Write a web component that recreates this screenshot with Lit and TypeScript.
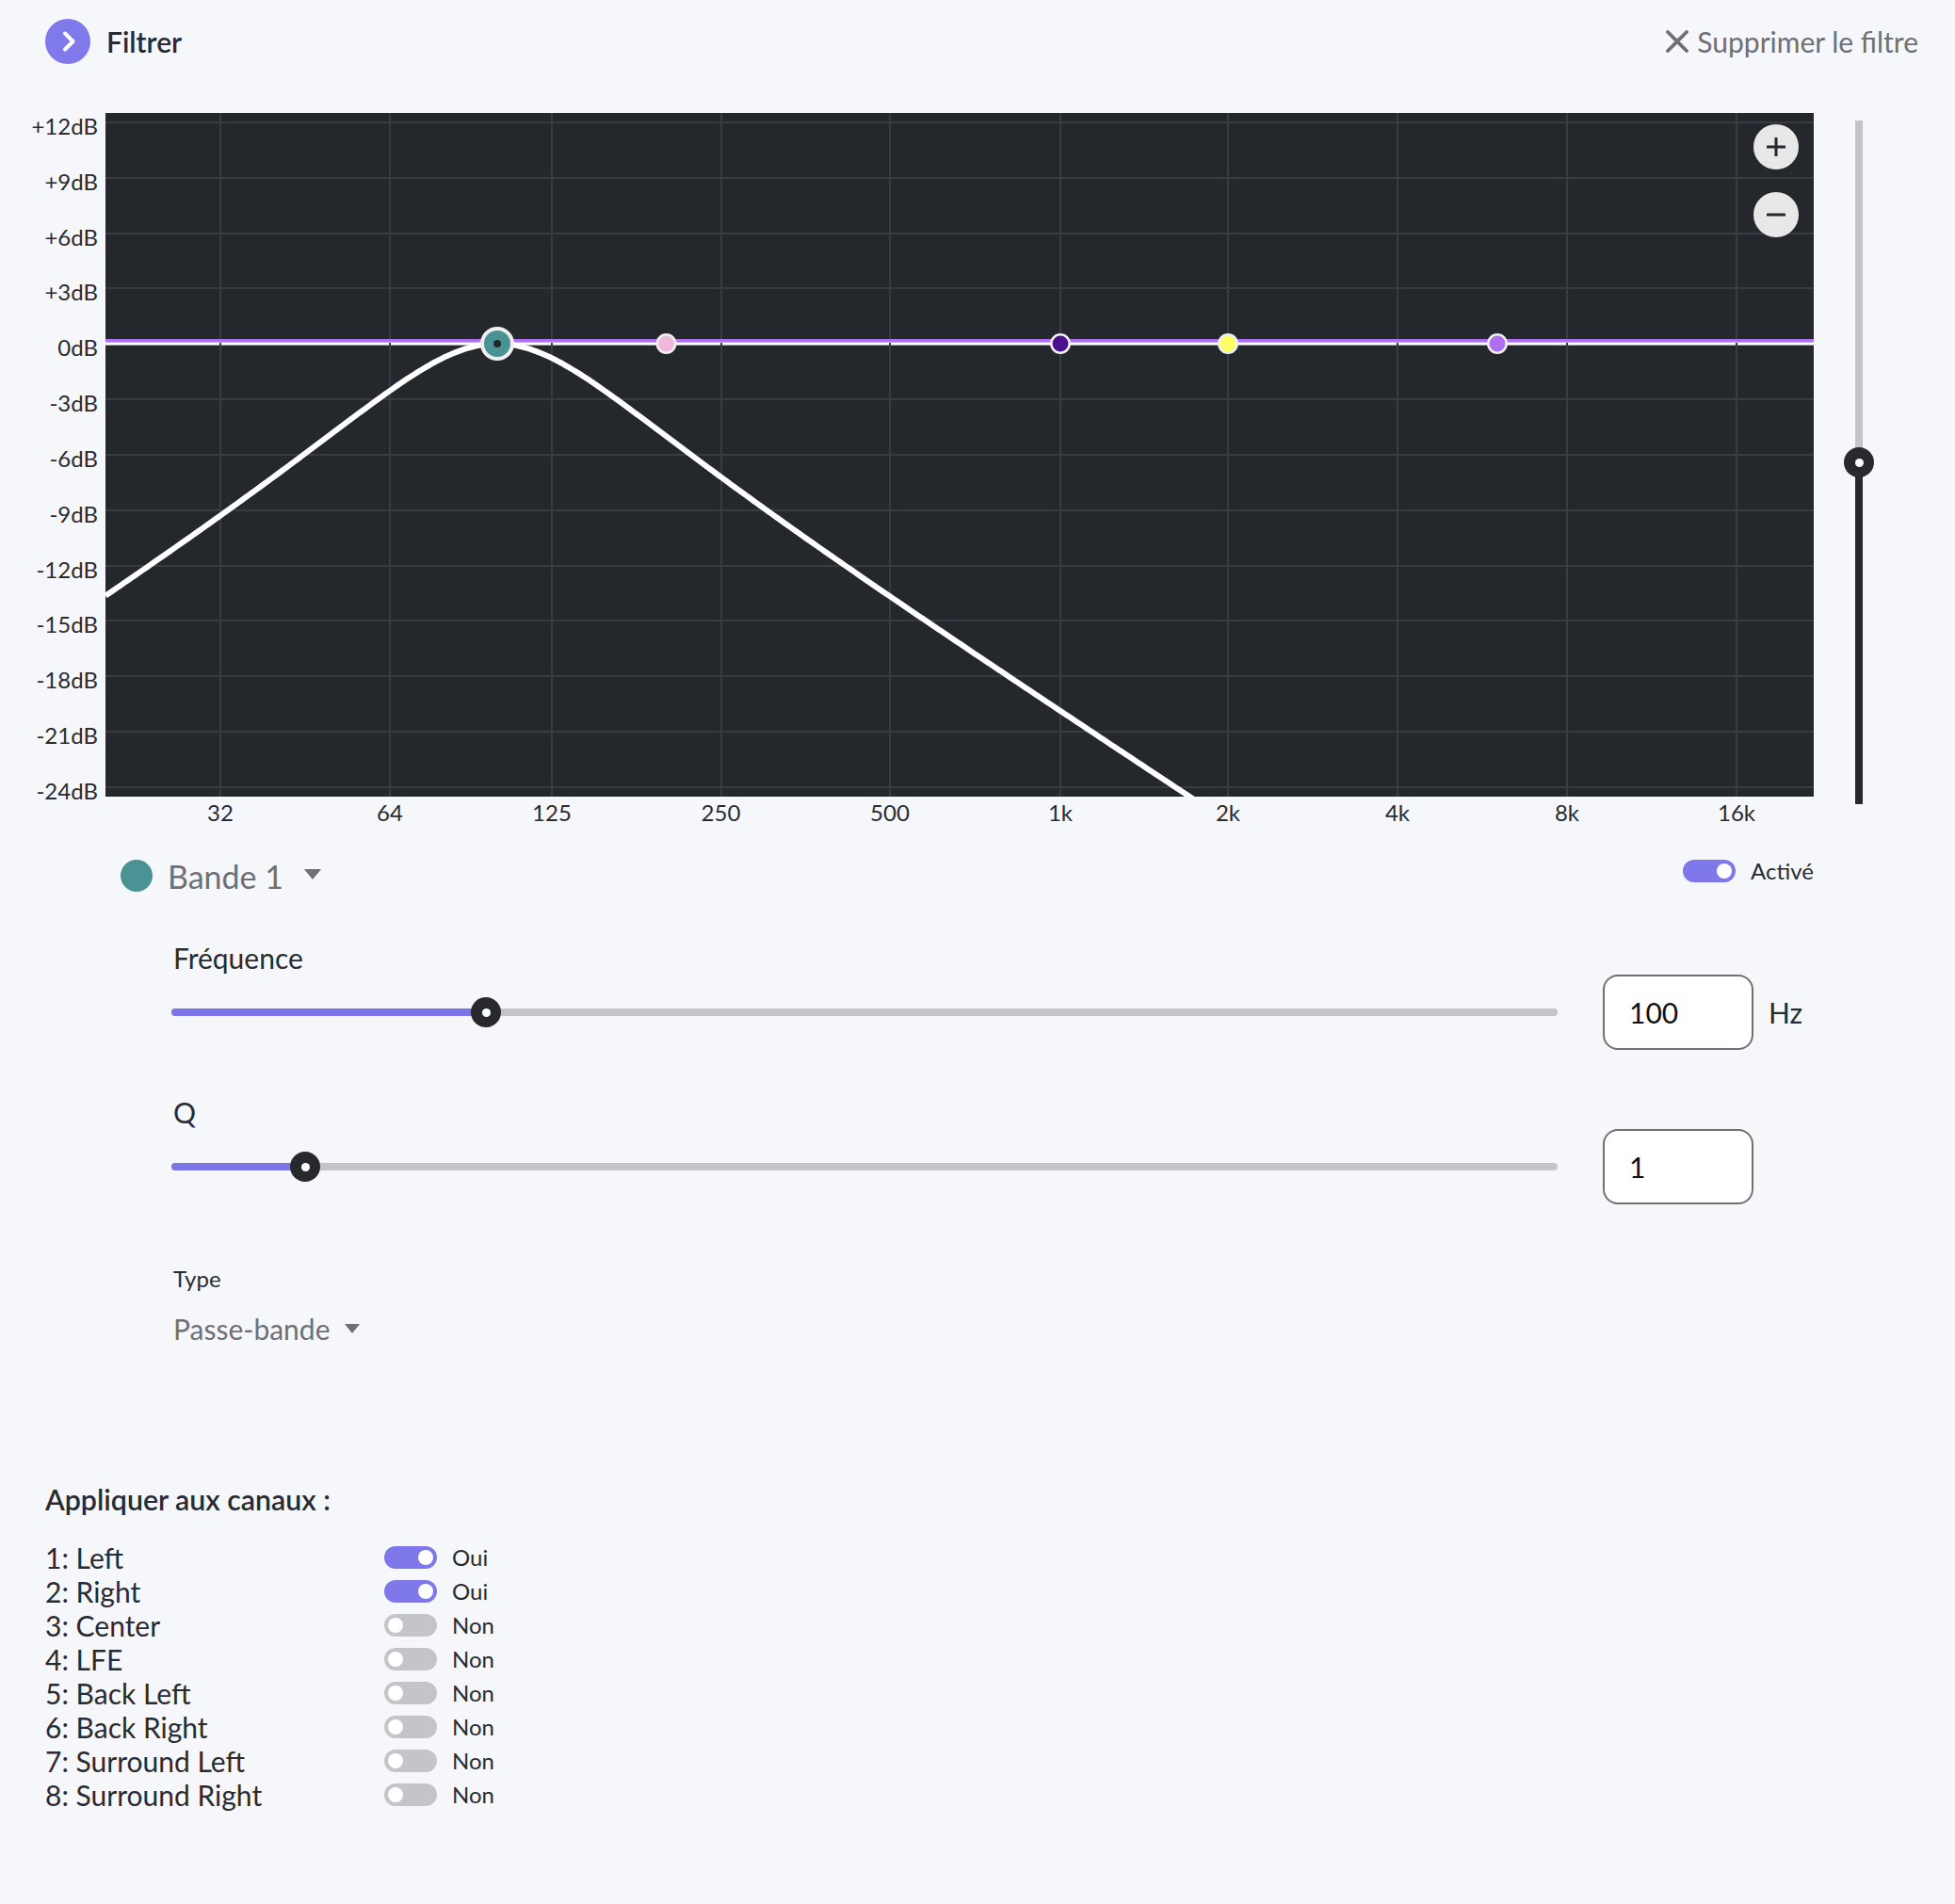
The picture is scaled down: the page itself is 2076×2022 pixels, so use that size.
import { LitElement, html, css, svg } from "lit";
import { customElement } from "lit/decorators.js";

const W = 1814;
const H = 726;
const ZERO = 245;
const DB_PX = 19.6;
const DB_LABELS = ["+12dB", "+9dB", "+6dB", "+3dB", "0dB", "-3dB", "-6dB", "-9dB", "-12dB", "-15dB", "-18dB", "-21dB", "-24dB"];
const FREQS: [string, number][] = [["32", 122], ["64", 302], ["125", 474], ["250", 653.5], ["500", 833], ["1k", 1014], ["2k", 1192], ["4k", 1372], ["8k", 1552], ["16k", 1732]];
const NODES: [number, string][] = [[707.5, "#f0b8dc"], [1126, "#4a1090"], [1304, "#ffff66"], [1590, "#b06ff0"]];
const CHANNELS: [string, boolean][] = [["1: Left", true], ["2: Right", true], ["3: Center", false], ["4: LFE", false], ["5: Back Left", false], ["6: Back Right", false], ["7: Surround Left", false], ["8: Surround Right", false]];

function curve(): string {
  const pts: string[] = [];
  for (let x = 0; x <= 1400; x += 4) {
    const f = 100 * Math.pow(2, (x - 416) / 179);
    const r = 0.98 * (f / 100 - 100 / f);
    const db = -10 * Math.log10(1 + r * r);
    pts.push(`${x},${(ZERO - db * DB_PX).toFixed(1)}`);
  }
  return pts.join(" ");
}

@customElement("app-root")
export class AppRoot extends LitElement {
  static styles = css`
    :host { display: block; width: 2076px; height: 2022px; background: #f5f7fb; font-family: Lato, "Liberation Sans", sans-serif; color: #2a2b30; overflow: hidden; }
    .header { display: flex; justify-content: space-between; align-items: center; height: 48px; padding: 20px 39px 52px 48px; }
    .title { display: flex; align-items: center; gap: 17px; font-size: 30px; font-weight: 600; }
    .round { width: 48px; height: 48px; border-radius: 50%; background: #8079ec; display: flex; align-items: center; justify-content: center; }
    .remove { display: flex; align-items: center; gap: 9px; font-size: 30px; color: #6e7075; }
    .chart { display: flex; align-items: flex-start; height: 726px; }
    .yaxis { width: 104px; margin: -15px 8px 0 0; display: flex; flex-direction: column; align-items: flex-end; }
    .yaxis span { height: 58.83px; line-height: 58.83px; font-size: 24px; }
    .graph { position: relative; width: 1814px; height: 726px; background: #24272c; }
    .graph svg { display: block; }
    .zoom { position: absolute; right: 16px; width: 48px; height: 48px; border-radius: 50%; background: #e8e8e8; display: flex; align-items: center; justify-content: center; }
    .zoom.in { top: 12px; }
    .zoom.out { top: 84px; }
    .vslider { position: relative; width: 8px; height: 726px; margin: 8px 0 0 44px; background: linear-gradient(#c4c5c9 0 50%, #28282f 50%); }
    .vslider .thumb { left: 4px; top: 363px; }
    .thumb { position: absolute; width: 32px; height: 32px; margin: -16px 0 0 -16px; border-radius: 50%; background: #28282f; display: flex; align-items: center; justify-content: center; }
    .thumb::after { content: ""; width: 9px; height: 9px; border-radius: 50%; background: #fff; }
    .xaxis { position: relative; height: 34px; margin-left: 112px; width: 1814px; }
    .xaxis span { position: absolute; top: 0; transform: translateX(-50%); font-size: 24px; line-height: 34px; }
    .band { display: flex; justify-content: space-between; align-items: flex-start; padding: 33px 150px 0 128px; height: 88px; }
    .band-left { display: flex; align-items: center; gap: 16px; font-size: 34px; color: #6e7075; height: 34px; }
    .dot { width: 34px; height: 34px; border-radius: 50%; background: #4b9295; }
    .caret { width: 0; height: 0; border-left: 9px solid transparent; border-right: 9px solid transparent; border-top: 11px solid #6e7075; margin-left: 6px; margin-bottom: 3px; }
    .toggle-wrap { display: flex; align-items: center; gap: 16px; font-size: 24px; line-height: 24px; }
    .toggle { width: 56px; height: 24px; border-radius: 12px; background: #c4c5c9; position: relative; flex: none; }
    .toggle::after { content: ""; position: absolute; left: 4px; top: 4px; width: 16px; height: 16px; border-radius: 50%; background: #fff; }
    .toggle.on { background: #7f78ea; }
    .toggle.on::after { left: 36px; }
    .params { padding: 0 0 0 182px; display: flex; flex-direction: column; gap: 50px; }
    .param label { display: block; font-size: 30px; line-height: 33px; padding-left: 2px; }
    .param-row { display: flex; align-items: center; height: 80px; margin-top: 1px; }
    .track { position: relative; width: 1472px; height: 8px; border-radius: 4px; background: #c4c5c9; }
    .fill { height: 8px; border-radius: 4px; background: #7c75e8; }
    .track .thumb { top: 4px; }
    .input { box-sizing: border-box; width: 160px; height: 80px; margin-left: 48px; border: 2px solid #707070; border-radius: 16px; background: #fff; padding-left: 26px; display: flex; align-items: center; font-size: 30px; color: #111; }
    .unit { font-size: 30px; margin-left: 16px; }
    .type { padding: 64px 0 0 184px; }
    .type-label { font-size: 24px; line-height: 30px; }
    .type-value { display: flex; align-items: center; gap: 12px; margin-top: 20px; font-size: 30px; line-height: 36px; color: #6e7075; }
    .type-value .caret { margin: 0 0 0 3px; border-left-width: 8.5px; border-right-width: 8.5px; border-top-width: 10px; }
    .channels { padding: 145px 0 0 48px; }
    .channels h3 { margin: 0 0 26px; font-size: 30.3px; font-weight: 600; line-height: 36px; }
    .ch { display: flex; align-items: center; height: 36px; font-size: 30px; }
    .ch-name { width: 360px; }
  `;

  private graph() {
    const vs = [122, 302, 474, 653.5, 833, 1014, 1192, 1372, 1552, 1732];
    return html`<svg width=${W} height=${H} viewBox="0 0 ${W} ${H}">
      ${DB_LABELS.map((_, i) => svg`<rect x="0" y=${Math.round(9 + i * 58.83)} width=${W} height="2" fill="#383b41"/>`)}
      <rect x="0" y="244" width=${W} height="2" fill="#ffffff"/>
      <rect x="0" y="246" width=${W} height="1" fill="#a8a8a8"/>
      ${vs.map((x) => svg`<rect x=${Math.round(x - 1)} y="0" width="2" height=${H} fill="#383b41"/>`)}
      <rect x="0" y="240" width=${W} height="3" fill="#b06ff0"/>
      <rect x="0" y="243" width=${W} height="1" fill="#cba6f2"/>
      <polyline points=${curve()} fill="none" stroke="#fff" stroke-width="6"/>
      ${NODES.map(([x, c]) => svg`<circle cx=${x - 112} cy="245" r="9.7" fill=${c} stroke="#efefef" stroke-width="2.6"/>`)}
      <circle cx="416" cy="245" r="16" fill="#4b9295" stroke="#efefef" stroke-width="4"/>
      <circle cx="416" cy="245" r="4" fill="#24272c"/>
    </svg>`;
  }

  private param(label: string, value: string, pct: number, unit = "") {
    return html`<div class="param">
      <label>${label}</label>
      <div class="param-row">
        <div class="track">
          <div class="fill" style="width:${pct}px"></div>
          <div class="thumb" style="left:${pct}px"></div>
        </div>
        <div class="input">${value}</div>
        ${unit ? html`<span class="unit">${unit}</span>` : ""}
      </div>
    </div>`;
  }

  render() {
    return html`
      <div class="header">
        <div class="title">
          <div class="round"><svg width="24" height="24" viewBox="0 0 24 24"><path d="M9 3.5l8.5 8.5-8.5 8.5" fill="none" stroke="#fff" stroke-width="4" stroke-linecap="round" stroke-linejoin="round"/></svg></div>
          Filtrer
        </div>
        <div class="remove">
          <svg width="24" height="24" viewBox="0 0 24 24"><path d="M2 2l20 20M22 2L2 22" stroke="#6e7075" stroke-width="3.8" stroke-linecap="round"/></svg>
          Supprimer le filtre
        </div>
      </div>
      <div class="chart">
        <div class="yaxis">${DB_LABELS.map((l) => html`<span>${l}</span>`)}</div>
        <div class="graph">
          ${this.graph()}
          <div class="zoom in"><svg width="20" height="20" viewBox="0 0 20 20"><path d="M10 1v18M1 10h18" stroke="#24272c" stroke-width="3" stroke-linecap="round"/></svg></div>
          <div class="zoom out"><svg width="20" height="20" viewBox="0 0 20 20"><path d="M1 10h18" stroke="#24272c" stroke-width="3" stroke-linecap="round"/></svg></div>
        </div>
        <div class="vslider"><div class="thumb"></div></div>
      </div>
      <div class="xaxis">${FREQS.map(([l, x]) => html`<span style="left:${x}px">${l}</span>`)}</div>
      <div class="band">
        <div class="band-left"><div class="dot"></div>Bande 1<div class="caret"></div></div>
        <div class="toggle-wrap"><div class="toggle on"></div>Activé</div>
      </div>
      <div class="params">
        ${this.param("Fréquence", "100", 334, "Hz")}
        ${this.param("Q", "1", 142)}
      </div>
      <div class="type">
        <div class="type-label">Type</div>
        <div class="type-value">Passe-bande<div class="caret"></div></div>
      </div>
      <div class="channels">
        <h3>Appliquer aux canaux :</h3>
        ${CHANNELS.map(([n, on]) => html`<div class="ch"><div class="ch-name">${n}</div><div class="toggle-wrap"><div class="toggle ${on ? "on" : ""}"></div>${on ? "Oui" : "Non"}</div></div>`)}
      </div>
    `;
  }
}
